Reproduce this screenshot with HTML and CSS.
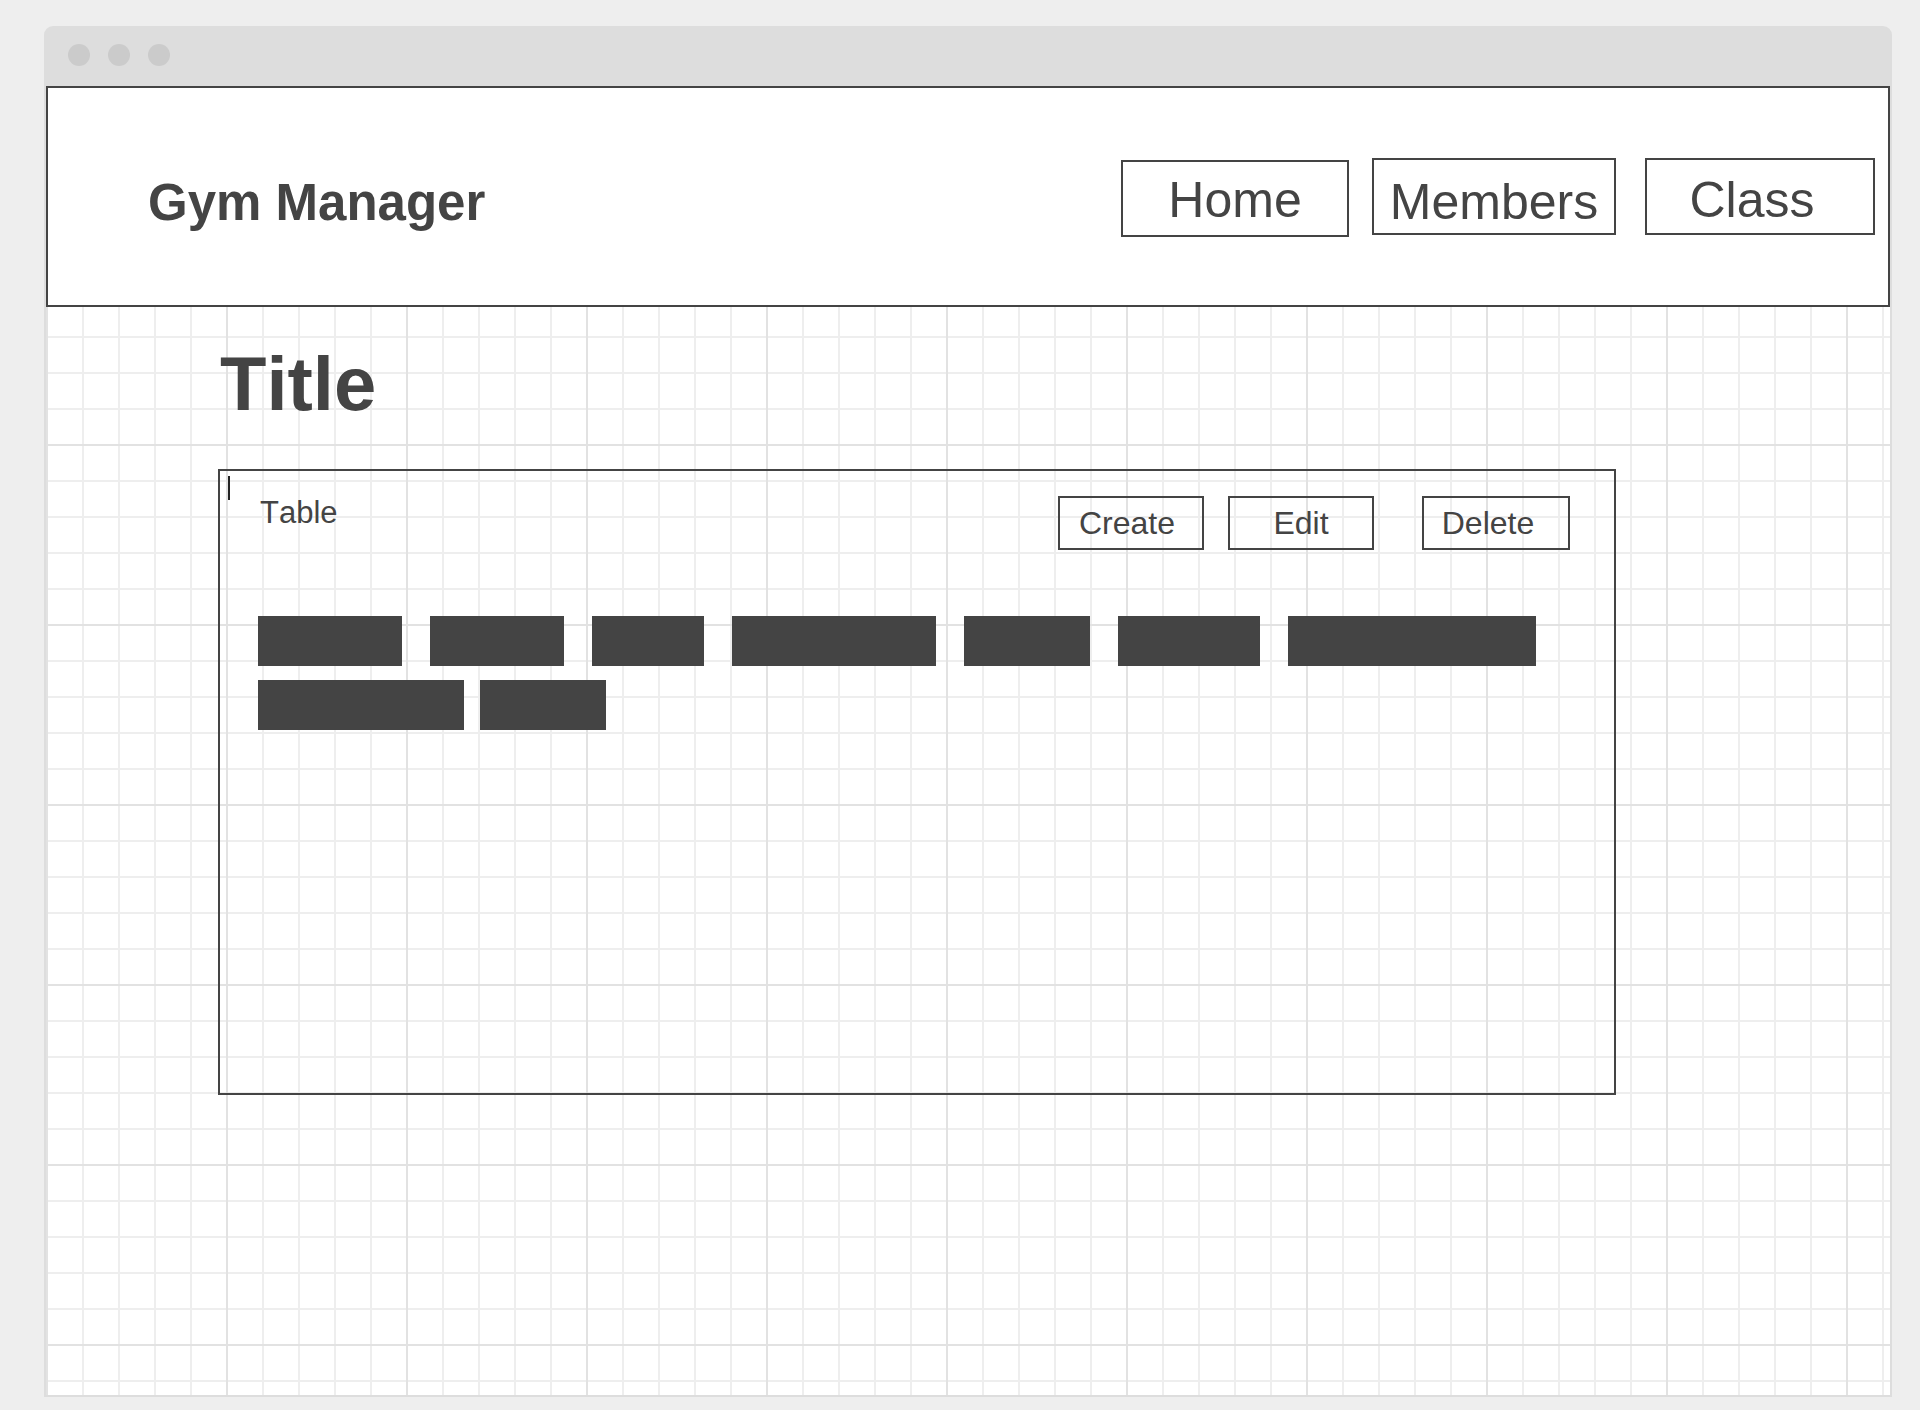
FILE: index.html
```html
<!DOCTYPE html>
<html lang="en">
<head>
<meta charset="utf-8">
<title>Gym Manager</title>
<link rel="stylesheet" href="styles.css">
</head>
<body>
<div class="window">
  <div class="titlebar">
    <span class="dot"></span>
    <span class="dot"></span>
    <span class="dot"></span>
  </div>
  <div class="canvas">
    <header class="header">
      <div class="brand">Gym Manager</div>
      <nav class="nav">
        <a class="nav-btn nav-home">Home</a>
        <a class="nav-btn nav-members">Members</a>
        <a class="nav-btn nav-class">Class</a>
      </nav>
    </header>
    <main class="main">
      <h1 class="title">Title</h1>
      <section class="panel">
        <span class="caret"></span>
        <div class="panel-top">
          <div class="panel-label">Table</div>
          <div class="actions">
            <button class="act act-create">Create</button>
            <button class="act act-edit">Edit</button>
            <button class="act act-delete">Delete</button>
          </div>
        </div>
        <div class="bars">
          <div class="bar-row">
            <span class="bar" style="width:144px"></span>
            <span class="bar" style="width:134px"></span>
            <span class="bar" style="width:112px"></span>
            <span class="bar" style="width:204px"></span>
            <span class="bar" style="width:126px"></span>
            <span class="bar" style="width:142px"></span>
            <span class="bar" style="width:248px"></span>
          </div>
          <div class="bar-row bar-row-tight">
            <span class="bar" style="width:206px"></span>
            <span class="bar" style="width:126px"></span>
          </div>
        </div>
      </section>
    </main>
  </div>
</div>
</body>
</html>
```

FILE: styles.css
```css
* { box-sizing: border-box; }

html, body {
  margin: 0;
  background: #eeeeee;
}

body {
  padding: 26px 28px 0 44px;
  height: 1410px;
  overflow: hidden;
  font-family: "Liberation Sans", Arial, sans-serif;
  font-kerning: none;
  color: #444444;
}

.window {
  height: 1371px;
  background: #dddddd;
  border-radius: 9px 9px 0 0;
  padding: 0 2px 2px 2px;
  display: flex;
  flex-direction: column;
}

.titlebar {
  height: 60px;
  flex: none;
  display: flex;
  gap: 18px;
  padding: 18px 0 0 22px;
}

.dot {
  width: 22px;
  height: 22px;
  border-radius: 50%;
  background: #cbcbcb;
}

.canvas {
  flex: 1;
  background-color: #ffffff;
  background-image:
    linear-gradient(to right, #e2e2e2 2px, transparent 2px),
    linear-gradient(to bottom, #e2e2e2 2px, transparent 2px),
    linear-gradient(to right, #eeeeee 2px, transparent 2px),
    linear-gradient(to bottom, #eeeeee 2px, transparent 2px);
  background-size: 180px 180px, 180px 180px, 36px 36px, 36px 36px;
  background-position: 0 0, 0 178px, 0 0, 0 34px;
}

/* header */
.header {
  height: 221px;
  border: 2px solid #444444;
  background: #ffffff;
  display: flex;
  align-items: flex-start;
  padding: 0 13px 0 100px;
}

.brand {
  margin-top: 89px;
  font-size: 51px;
  line-height: 51px;
  font-weight: bold;
  white-space: nowrap;
}

.nav {
  margin-left: auto;
  display: flex;
  align-items: flex-start;
}

.nav-btn {
  display: block;
  height: 77px;
  border: 2px solid #444444;
  font-size: 50px;
  line-height: 73px;
  text-align: center;
  white-space: nowrap;
  overflow: hidden;
}

.nav-home {
  width: 228px;
  margin-top: 72px;
  padding-top: 2px;
}

.nav-members {
  width: 244px;
  margin-top: 70px;
  margin-left: 23px;
  padding-top: 6px;
}

.nav-class {
  width: 230px;
  margin-top: 70px;
  margin-left: 29px;
  padding-top: 4px;
  padding-right: 16px;
}

/* main */
.main {
  padding-left: 172px;
}

.title {
  margin: 39px 0 0 2px;
  font-size: 76px;
  line-height: 76px;
  font-weight: bold;
}

.panel {
  position: relative;
  width: 1398px;
  height: 626px;
  margin-top: 47px;
  border: 2px solid #444444;
  padding: 25px 44px 0 38px;
}

.caret {
  position: absolute;
  left: 8px;
  top: 5px;
  width: 2px;
  height: 24px;
  background: #222222;
}

.panel-top {
  display: flex;
  align-items: flex-start;
}

.panel-label {
  margin: 1px 0 0 2px;
  font-size: 31px;
  line-height: 31px;
}

.actions {
  margin-left: auto;
  display: flex;
  gap: 24px;
}

.act {
  width: 146px;
  height: 54px;
  border: 2px solid #444444;
  background: transparent;
  padding: 0;
  margin: 0;
  font-family: "Liberation Sans", Arial, sans-serif;
  font-kerning: none;
  font-size: 32px;
  line-height: 50px;
  color: #444444;
  text-align: center;
}

.act-create { padding-right: 8px; }
.act-delete { width: 148px; margin-left: 24px; padding-right: 16px; }

.bars {
  margin-top: 66px;
}

.bar-row {
  display: flex;
  gap: 28px;
}

.bar-row-tight {
  margin-top: 14px;
  gap: 16px;
}

.bar {
  display: block;
  height: 50px;
  background: #444444;
}
```
